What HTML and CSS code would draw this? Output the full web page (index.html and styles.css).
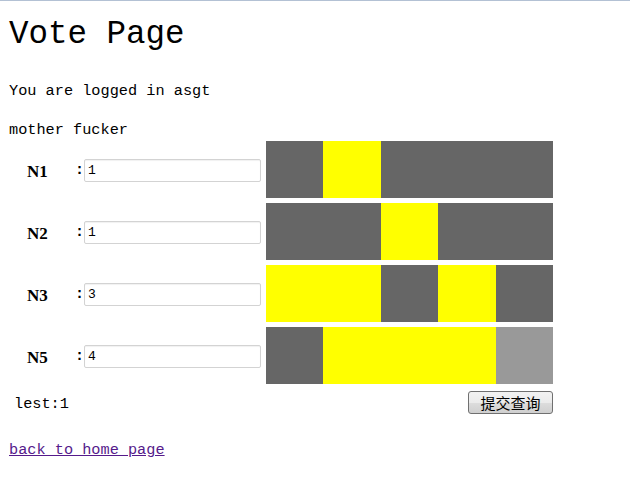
FILE: index.html
```html
<!DOCTYPE html>
<html>
<head>
<meta charset="utf-8">
<title>Vote Page</title>
<link rel="stylesheet" href="styles.css">
</head>
<body>
<div class="page">
  <h1 class="title">Vote Page</h1>
  <p class="line first">You are logged in asgt</p>
  <p class="line second">mother fucker</p>
  <form class="vote">
    <div class="row">
      <span class="label">N1</span><span class="colon">:</span><input class="field" type="text" value="1">
      <div class="bar"><i class="seg dark"></i><i class="seg yellow"></i><i class="seg dark"></i><i class="seg dark"></i><i class="seg dark"></i></div>
    </div>
    <div class="row">
      <span class="label">N2</span><span class="colon">:</span><input class="field" type="text" value="1">
      <div class="bar"><i class="seg dark"></i><i class="seg dark"></i><i class="seg yellow"></i><i class="seg dark"></i><i class="seg dark"></i></div>
    </div>
    <div class="row">
      <span class="label">N3</span><span class="colon">:</span><input class="field" type="text" value="3">
      <div class="bar"><i class="seg yellow"></i><i class="seg yellow"></i><i class="seg dark"></i><i class="seg yellow"></i><i class="seg dark"></i></div>
    </div>
    <div class="row">
      <span class="label">N5</span><span class="colon">:</span><input class="field" type="text" value="4">
      <div class="bar"><i class="seg dark"></i><i class="seg yellow"></i><i class="seg yellow"></i><i class="seg yellow"></i><i class="seg light"></i></div>
    </div>
    <div class="footer">
      <span class="lest">lest:1</span>
      <button class="submit" type="button">提交查询</button>
    </div>
  </form>
  <a class="back" href="#">back to home page</a>
</div>
</body>
</html>
```

FILE: styles.css
```css
html, body {
  margin: 0;
  padding: 0;
  background: #fff;
}
body {
  border-top: 1px solid #b3c1d4;
  font-family: "Liberation Mono", "Noto Sans CJK SC", monospace;
  color: #000;
}
.page {
  padding-left: 9px;
  width: 560px;
}
.title {
  margin: 14px 0 0 0;
  font-size: 32.5px;
  line-height: 40px;
  font-weight: normal;
  height: 41px;
}
.line {
  margin: 0;
  font-size: 15.25px;
  line-height: 20px;
}
.first { margin-top: 25px; }
.second { margin-top: 19px; }
.vote {
  margin: 1px 0 0 0;
  display: flex;
  flex-direction: column;
  gap: 5px;
}
.row {
  display: flex;
  align-items: center;
  height: 57px;
}
.label {
  width: 48px;
  padding-left: 18px;
  padding-top: 4px;
  font-family: "Liberation Serif", serif;
  font-weight: bold;
  font-size: 17px;
  line-height: 20px;
}
.colon {
  width: 9px;
  font-size: 15px;
  font-weight: bold;
  line-height: 20px;
  padding-top: 2px;
  text-align: center;
}
.field {
  box-sizing: border-box;
  width: 177px;
  height: 23px;
  margin: 1px 5px 0 0;
  padding: 1px 3px 0 3px;
  border: 1px solid #d3d3d3;
  border-radius: 2px;
  box-shadow: inset 0 1px 1px rgba(0,0,0,0.06);
  font-family: "Liberation Mono", monospace;
  font-size: 13px;
  color: #000;
  background: #fff;
  outline: none;
}
.bar {
  display: flex;
  width: 287px;
  height: 57px;
}
.seg {
  flex: 1;
}
.dark { background: #666666; }
.yellow { background: #ffff00; }
.light { background: #999999; }
.footer {
  display: flex;
  justify-content: space-between;
  align-items: flex-start;
  width: 544px;
  margin-top: 2px;
}
.lest {
  padding-left: 5px;
  padding-top: 2px;
  font-size: 15.25px;
  line-height: 23px;
}
.submit {
  box-sizing: border-box;
  width: 85px;
  height: 23px;
  padding: 0;
  border: 1px solid #707070;
  border-radius: 3px;
  background: linear-gradient(#f2f2f2 0%, #ebebeb 50%, #dddddd 51%, #cfcfcf 100%);
  font-family: "Noto Sans CJK SC", sans-serif;
  font-size: 15px;
  line-height: 20px;
  color: #000;
}
.back {
  display: inline-block;
  margin-top: 24px;
  font-size: 15.25px;
  line-height: 20px;
  color: #551a8b;
  text-decoration: underline;
}
```
